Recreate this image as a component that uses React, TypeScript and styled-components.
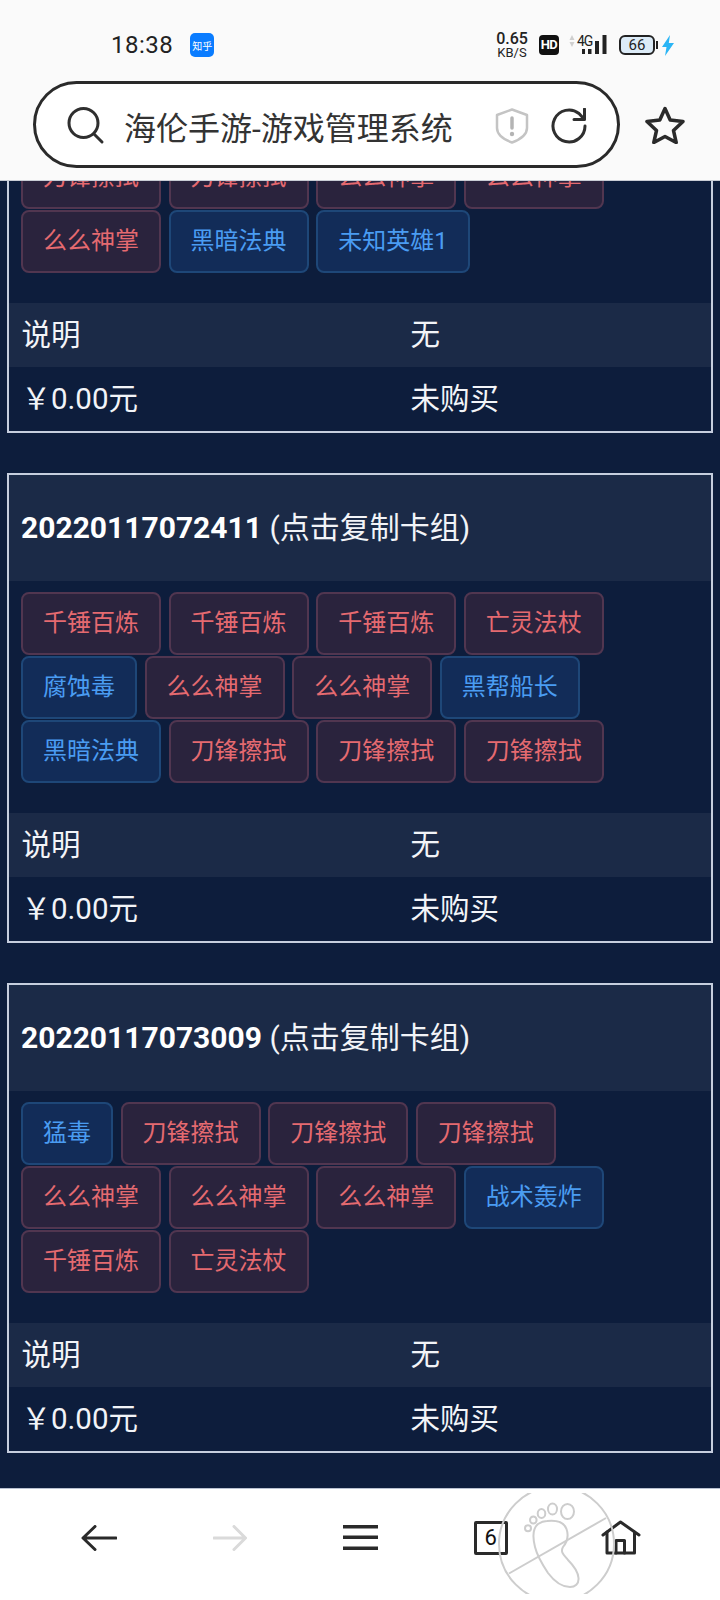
import React from 'react'
import styled, { createGlobalStyle } from 'styled-components'

const GlobalStyle = createGlobalStyle`
  html, body {
    margin: 0;
    padding: 0;
    background: #0d1d3c;
  }
  * {
    box-sizing: border-box;
  }
`

type Tone = 'red' | 'blue'

interface CardData {
  title?: string
  tags: [string, Tone][]
}

const r = (name: string): [string, Tone] => [name, 'red']
const b = (name: string): [string, Tone] => [name, 'blue']

const cards: CardData[] = [
  {
    tags: [r('刀锋擦拭'), r('刀锋擦拭'), r('么么神掌'), r('么么神掌'), r('么么神掌'), b('黑暗法典'), b('未知英雄1')],
  },
  {
    title: '20220117072411',
    tags: [
      r('千锤百炼'), r('千锤百炼'), r('千锤百炼'), r('亡灵法杖'),
      b('腐蚀毒'), r('么么神掌'), r('么么神掌'), b('黑帮船长'),
      b('黑暗法典'), r('刀锋擦拭'), r('刀锋擦拭'), r('刀锋擦拭'),
    ],
  },
  {
    title: '20220117073009',
    tags: [
      b('猛毒'), r('刀锋擦拭'), r('刀锋擦拭'), r('刀锋擦拭'),
      r('么么神掌'), r('么么神掌'), r('么么神掌'), b('战术轰炸'),
      r('千锤百炼'), r('亡灵法杖'),
    ],
  },
]

const StatusBar = () => (
  <StatusRow>
    <Time>18:38</Time>
    <AppBadge>知乎</AppBadge>
    <StatusRight>
      <Speed>
        <SpeedValue>0.65</SpeedValue>
        <SpeedUnit>KB/S</SpeedUnit>
      </Speed>
      <HdBadge>HD</HdBadge>
      <svg width="38" height="24" viewBox="0 0 38 24">
        <path d="M0.500 7l2.500-5 2.500 5zM0.500 9l2.500 5 2.500-5z" fill="#cfcfcf" />
        <text x="8" y="13" fontSize="14" fontFamily="Roboto, sans-serif" fill="#222" letterSpacing="-1">
          4G
        </text>
        <path d="M13 16h3v5h-3zM19 16h3.500v5H19zM26 8h4v13h-4zM33.500 2h4v19h-4z" fill="#222" />
      </svg>
      <BatteryWrap>
        <Battery>66</Battery>
        <BatteryTip />
      </BatteryWrap>
      <BoltIcon width="12" height="21" viewBox="0 0 12 21">
        <path d="M8 0L0 12h4.500L3 21l9-13H6.800z" fill="#2bb5f5" />
      </BoltIcon>
    </StatusRight>
  </StatusRow>
)

const AddressBar = () => (
  <AddressRow>
    <UrlPill>
      <svg width="38" height="38" viewBox="0 0 38 38" fill="none" stroke="#2f2f2f" strokeWidth="3" strokeLinecap="round">
        <circle cx="16.500" cy="16" r="14.500" />
        <path d="M27 27l8 8" />
      </svg>
      <UrlText>海伦手游-游戏管理系统</UrlText>
      <svg width="34" height="36" viewBox="0 0 34 36" fill="none">
        <path d="M17 1.500l15 5.500v13c0 7-7 11.500-15 14.500-8-3-15-7.500-15-14.500V7z" stroke="#c4c4c4" strokeWidth="2.500" strokeLinejoin="round" />
        <path d="M17 10v10" stroke="#b4b4b4" strokeWidth="3.500" strokeLinecap="round" />
        <circle cx="17" cy="26" r="2.200" fill="#b4b4b4" />
      </svg>
      <ReloadIcon width="36" height="36" viewBox="0 0 36 36" fill="none" stroke="#2f2f2f" strokeWidth="3" strokeLinecap="round" strokeLinejoin="round">
        <path d="M34 18A16 16 0 1 1 28 5.500L33 11" />
        <path d="M33.500 1v10.500H23" />
      </ReloadIcon>
    </UrlPill>
    <svg width="40" height="38" viewBox="0 0 40 38" fill="none" stroke="#2a2a2a" strokeWidth="3.500" strokeLinejoin="round">
      <path d="M20 2.500l5.200 11.500 12.800 1.500-9.500 9 2.700 12L20 30.500 8.800 36.500l2.700-12-9.500-9 12.800-1.500z" />
    </svg>
  </AddressRow>
)

const DeckCard = ({ title, tags }: CardData) => (
  <Card>
    {title && (
      <CardHeader>
        <DeckId>{title}</DeckId> (点击复制卡组)
      </CardHeader>
    )}
    <TagList>
      {tags.map(([name, tone], index) => (
        <Tag key={index} $tone={tone}>
          {name}
        </Tag>
      ))}
    </TagList>
    <InfoRow $striped>
      <span>说明</span>
      <span>无</span>
    </InfoRow>
    <InfoRow>
      <span>￥0.00元</span>
      <span>未购买</span>
    </InfoRow>
  </Card>
)

const BottomBar = () => (
  <BottomNav>
    <NavIcon>
      <svg width="36" height="26" viewBox="0 0 36 26" fill="none" stroke="#2a2a2a" strokeWidth="3" strokeLinecap="round" strokeLinejoin="round">
        <path d="M35 13H3M14 1.500L2 13l12 11.500" />
      </svg>
    </NavIcon>
    <NavIcon>
      <svg width="34" height="26" viewBox="0 0 34 26" fill="none" stroke="#dadada" strokeWidth="3" strokeLinecap="round" strokeLinejoin="round">
        <path d="M1 13h31M21 1.500L32.500 13 21 24.500" />
      </svg>
    </NavIcon>
    <NavIcon>
      <svg width="35" height="25" viewBox="0 0 35 25" fill="#2a2a2a">
        <rect width="35" height="3.500" />
        <rect y="10.500" width="35" height="3.500" />
        <rect y="21.500" width="35" height="3.500" />
      </svg>
    </NavIcon>
    <TabCount>6</TabCount>
    <NavIcon>
      <svg width="40" height="35" viewBox="0 0 40 35" fill="none" stroke="#2a2a2a" strokeWidth="3" strokeLinecap="round" strokeLinejoin="round">
        <path d="M2 15L19.500 2 38 15" />
        <path d="M6 12v21h27.500V12" />
        <path d="M15 33V20.500h8.500V33" />
      </svg>
    </NavIcon>
    <Watermark width="118" height="101" viewBox="0 0 118 101" fill="none" stroke="#cdcdcd" strokeWidth="2">
      <circle cx="58.500" cy="51" r="57.500" />
      <path d="M11 80.500L108 25" />
      <path d="M49 28C58 27 66 29 68.500 36C71 43 69 49 65 54C62 59 66 62 70 67C75 72 80 78 80.500 85C81 91 77 94 72 94C64 94 56 88 50 80C44 71 39 62 37 54C35 46 34 36 40 31C43 29 46 28 49 28Z" />
      <ellipse cx="69.500" cy="18.500" rx="6.500" ry="7.500" />
      <ellipse cx="54.500" cy="16" rx="4.500" ry="5.500" />
      <ellipse cx="43.500" cy="20.500" rx="3.800" ry="4.500" />
      <ellipse cx="35.300" cy="27" rx="3.300" ry="3.500" />
      <ellipse cx="30" cy="35.300" rx="3" ry="3" />
    </Watermark>
  </BottomNav>
)

export default function App() {
  return (
    <Screen>
      <GlobalStyle />
      <TopChrome>
        <StatusBar />
        <AddressBar />
      </TopChrome>
      <Viewport>
        <Feed>
          {cards.map((card, index) => (
            <DeckCard key={index} {...card} />
          ))}
        </Feed>
      </Viewport>
      <BottomBar />
    </Screen>
  )
}

const Screen = styled.div`
  display: flex;
  flex-direction: column;
  width: 720px;
  height: 1600px;
  overflow: hidden;
  font-family: Roboto, 'Noto Sans CJK SC', sans-serif;
  background: #0d1d3c;
`

const TopChrome = styled.header`
  flex: none;
  height: 181px;
  padding-top: 30px;
  background: #fafafa;
  border-bottom: 1px solid #c8ccd4;
`

const StatusRow = styled.div`
  display: flex;
  align-items: center;
  height: 30px;
  padding: 0 46px 0 111px;
  color: #222;
`

const Time = styled.span`
  font-size: 24px;
  letter-spacing: 0.5px;
`

const AppBadge = styled.span`
  display: flex;
  align-items: center;
  justify-content: center;
  width: 24px;
  height: 24px;
  margin-left: 17px;
  border-radius: 5px;
  background: #0a7cff;
  color: #fff;
  font-size: 10px;
  white-space: nowrap;
`

const StatusRight = styled.div`
  display: flex;
  align-items: center;
  gap: 10px;
  margin-left: auto;
`

const Speed = styled.div`
  display: flex;
  flex-direction: column;
  align-items: center;
  width: 34px;
  line-height: 1;
`

const SpeedValue = styled.span`
  font-size: 16px;
  font-weight: 500;
  line-height: 15px;
`

const SpeedUnit = styled.span`
  font-size: 13px;
  line-height: 13px;
`

const HdBadge = styled.span`
  width: 20px;
  height: 20px;
  border-radius: 4px;
  background: #111;
  color: #fff;
  font-size: 13px;
  font-weight: 700;
  line-height: 20px;
  text-align: center;
  letter-spacing: -0.5px;
`

const BatteryWrap = styled.div`
  display: flex;
  align-items: center;
  gap: 1px;
  margin-left: 2px;
`

const Battery = styled.span`
  width: 36px;
  height: 20px;
  border: 2px solid #222;
  border-radius: 6px;
  background: #dcebf7;
  font-size: 15px;
  line-height: 16px;
  text-align: center;
  color: #222;
`

const BatteryTip = styled.span`
  width: 2px;
  height: 8px;
  background: #222;
`

const BoltIcon = styled.svg`
  margin-left: -6px;
`

const AddressRow = styled.div`
  display: flex;
  align-items: center;
  gap: 25px;
  margin-top: 21px;
  padding-left: 33px;
`

const UrlPill = styled.div`
  display: flex;
  align-items: center;
  width: 587px;
  height: 87px;
  padding: 2px 30px 0 31px;
  border: 3px solid #2a2a2a;
  border-radius: 44px;
  background: #fff;
`

const UrlText = styled.span`
  flex: 1;
  margin-left: 19px;
  font-size: 32px;
  color: #333;
  white-space: nowrap;
`

const ReloadIcon = styled.svg`
  margin-left: 22px;
`

const Viewport = styled.main`
  flex: 1;
  min-height: 0;
  overflow: hidden;
`

/* the page is scrolled: the first card starts above the fold */
const Feed = styled.div`
  display: flex;
  flex-direction: column;
  gap: 40px;
  margin-top: -48px;
  padding: 0 7px;
`

const Card = styled.section`
  flex: none;
  border: 2px solid #c6cede;
  background: #0d1d3c;
`

const CardHeader = styled.div`
  height: 106px;
  padding: 0 12px;
  background: #1b2a47;
  color: #f2f4f8;
  font-size: 30px;
  line-height: 106px;
  white-space: nowrap;
`

const DeckId = styled.strong`
  font-weight: 700;
  color: #fff;
`

const TagList = styled.div`
  display: flex;
  flex-wrap: wrap;
  align-content: flex-start;
  gap: 1px 7.6px;
  padding: 11px 12px 30px;
`

const Tag = styled.span<{ $tone: Tone }>`
  height: 63px;
  padding: 0 20px;
  border: 2px solid ${({ $tone }) => ($tone === 'red' ? '#513650' : '#1e4778')};
  border-radius: 8px;
  background: ${({ $tone }) => ($tone === 'red' ? '#2a233d' : '#122c58')};
  color: ${({ $tone }) => ($tone === 'red' ? '#e56a70' : '#4a9cf2')};
  font-size: 24px;
  line-height: 59px;
  white-space: nowrap;
`

const InfoRow = styled.div<{ $striped?: boolean }>`
  display: grid;
  grid-template-columns: 389px 1fr;
  align-items: center;
  height: 64px;
  padding: 0 13px 6px 12.5px;
  background: ${({ $striped }) => ($striped ? '#1b2a47' : 'transparent')};
  color: #f2f4f8;
  font-size: 29.5px;
`

const BottomNav = styled.nav`
  position: relative;
  flex: none;
  display: grid;
  grid-template-columns: repeat(5, 130.5px);
  justify-items: center;
  align-items: center;
  height: 112px;
  padding: 0 0 14px 34px;
  border-top: 1px solid #b8c0d0;
  background: #fff;
`

const NavIcon = styled.span`
  display: flex;
  align-items: center;
  justify-content: center;
`

const TabCount = styled.span`
  width: 34px;
  height: 34px;
  border: 3px solid #2a2a2a;
  border-radius: 2px;
  color: #111;
  font-size: 22px;
  line-height: 28px;
  text-align: center;
`

const Watermark = styled.svg`
  position: absolute;
  left: 498px;
  top: 4px;
`
